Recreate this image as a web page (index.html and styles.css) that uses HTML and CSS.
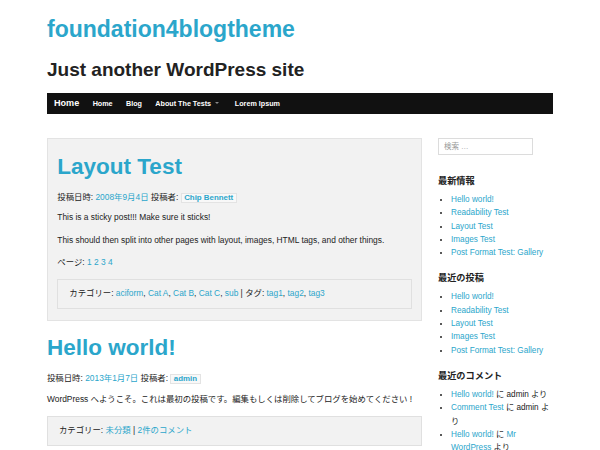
FILE: index.html
```html
<!DOCTYPE html>
<html lang="ja">
<head>
<meta charset="utf-8">
<title>foundation4blogtheme</title>
<link rel="stylesheet" href="styles.css">
</head>
<body>
<div class="page">
  <header class="site-header">
    <h1 class="site-title">foundation4blogtheme</h1>
    <h2 class="site-desc">Just another WordPress site</h2>
  </header>
  <nav class="top-bar">
    <a class="brand" href="#">Home</a>
    <a class="nav-item" href="#">Home</a>
    <a class="nav-item" href="#">Blog</a>
    <a class="nav-item has-dropdown" href="#">About The Tests<span class="caret"></span></a>
    <a class="nav-item" href="#">Lorem Ipsum</a>
  </nav>
  <div class="layout">
    <main class="content">
      <article class="post sticky">
        <h1 class="post-title">Layout Test</h1>
        <p class="meta">投稿日時: <a href="#">2008年9月4日</a> 投稿者: <span class="badge">Chip Bennett</span></p>
        <p>This is a sticky post!!! Make sure it sticks!</p>
        <p>This should then split into other pages with layout, images, HTML tags, and other things.</p>
        <p class="pages">ページ: <a href="#">1</a> <a href="#">2</a> <a href="#">3</a> <a href="#">4</a></p>
        <div class="post-footer">カテゴリー: <a href="#">aciform</a>, <a href="#">Cat A</a>, <a href="#">Cat B</a>, <a href="#">Cat C</a>, <a href="#">sub</a> | タグ: <a href="#">tag1</a>, <a href="#">tag2</a>, <a href="#">tag3</a></div>
      </article>
      <article class="post">
        <h1 class="post-title">Hello world!</h1>
        <p class="meta">投稿日時: <a href="#">2013年1月7日</a> 投稿者: <span class="badge">admin</span></p>
        <p>WordPress へようこそ。これは最初の投稿です。編集もしくは削除してブログを始めてください !</p>
        <div class="post-footer">カテゴリー: <a href="#">未分類</a> | <a href="#">2件のコメント</a></div>
      </article>
    </main>
    <aside class="sidebar">
      <input class="search" type="text" placeholder="検索 …">
      <h3 class="widget-title">最新情報</h3>
      <ul class="widget-list">
        <li><a href="#">Hello world!</a></li>
        <li><a href="#">Readability Test</a></li>
        <li><a href="#">Layout Test</a></li>
        <li><a href="#">Images Test</a></li>
        <li><a href="#">Post Format Test: Gallery</a></li>
      </ul>
      <h3 class="widget-title">最近の投稿</h3>
      <ul class="widget-list">
        <li><a href="#">Hello world!</a></li>
        <li><a href="#">Readability Test</a></li>
        <li><a href="#">Layout Test</a></li>
        <li><a href="#">Images Test</a></li>
        <li><a href="#">Post Format Test: Gallery</a></li>
      </ul>
      <h3 class="widget-title">最近のコメント</h3>
      <ul class="widget-list">
        <li><a href="#">Hello world!</a> に admin より</li>
        <li><a href="#">Comment Test</a> に admin より</li>
        <li><a href="#">Hello world!</a> に <a href="#">Mr WordPress</a> より</li>
      </ul>
    </aside>
  </div>
</div>
</body>
</html>
```
FILE: styles.css
```css
html, body {
  margin: 0;
  padding: 0;
  background: #fff;
}
body {
  font-family: "Liberation Sans", "Noto Sans CJK JP", sans-serif;
  font-size: 8.2px;
  line-height: 13.3px;
  color: #222;
}
a {
  color: #2ba6cb;
  text-decoration: none;
}
.page {
  width: 506px;
  margin-left: 47px;
  padding-top: 17px;
}
.site-title {
  margin: 0;
  font-size: 23px;
  line-height: 24px;
  font-weight: bold;
  color: #2ba6cb;
}
.site-desc {
  margin: 18.6px 0 0;
  font-size: 19px;
  line-height: 20px;
  font-weight: bold;
  color: #222;
}
.top-bar {
  margin-top: 13.4px;
  height: 21px;
  background: #111;
  display: flex;
  align-items: center;
  padding-left: 7px;
}
.top-bar a {
  color: #fff;
  font-weight: bold;
}
.brand {
  font-size: 9.1px;
  padding-right: 6.7px;
}
.nav-item {
  font-size: 7.2px;
  padding: 0 6.7px;
  display: flex;
  align-items: center;
}
.has-dropdown {
  padding-right: 9px;
}
.caret {
  display: inline-block;
  width: 0;
  height: 0;
  margin-left: 4px;
  border-left: 2px solid transparent;
  border-right: 2px solid transparent;
  border-top: 2px solid #8a8a8a;
}
.layout {
  display: grid;
  grid-template-columns: 375px 115px;
  column-gap: 16px;
  margin-top: 24px;
  align-items: start;
}
.content {
  font-size: 8.4px;
}
.post {
  margin-bottom: 13px;
}
.post.sticky {
  background: #f2f2f2;
  border: 1px solid #e3e3e3;
  padding: 13.7px 9.3px 11px;
}
.post-title {
  margin: 0 0 11px;
  font-size: 22.5px;
  line-height: 27px;
  font-weight: bold;
  color: #2ba6cb;
}
.post p {
  margin: 0 0 9px;
}
.post p.meta {
  margin-bottom: 7.4px;
}
.badge {
  display: inline-block;
  line-height: 8px;
  padding: 0 2.5px;
  font-size: 7.9px;
  font-weight: bold;
  color: #2ba6cb;
  background: #f8f8f8;
  border: 1px solid #e3e3e3;
}
.post p.pages {
  margin-bottom: 10px;
}
.post-footer {
  background: #f2f2f2;
  border: 1px solid #e0e0e0;
  padding: 7.2px 11px;
  margin-top: 10px;
}
.sidebar {
  display: flex;
  flex-direction: column;
}
.search {
  box-sizing: border-box;
  width: 95px;
  height: 17px;
  margin: 0;
  padding: 0 5px;
  border: 1px solid #dcdcdc;
  font-family: "Liberation Sans", "Noto Sans CJK JP", sans-serif;
  font-size: 7.5px;
  color: #222;
  background: #fff;
  outline: none;
}
.search::placeholder {
  color: #999;
}
.widget-title {
  margin: 20px 0 5px;
  font-size: 9.2px;
  line-height: 13px;
  font-weight: bold;
  color: #222;
}
.widget-list + .widget-title {
  margin-top: 13px;
}
.widget-list {
  margin: 0;
  padding-left: 13px;
  list-style: disc;
}
.widget-list li {
  line-height: 13.3px;
}
```
